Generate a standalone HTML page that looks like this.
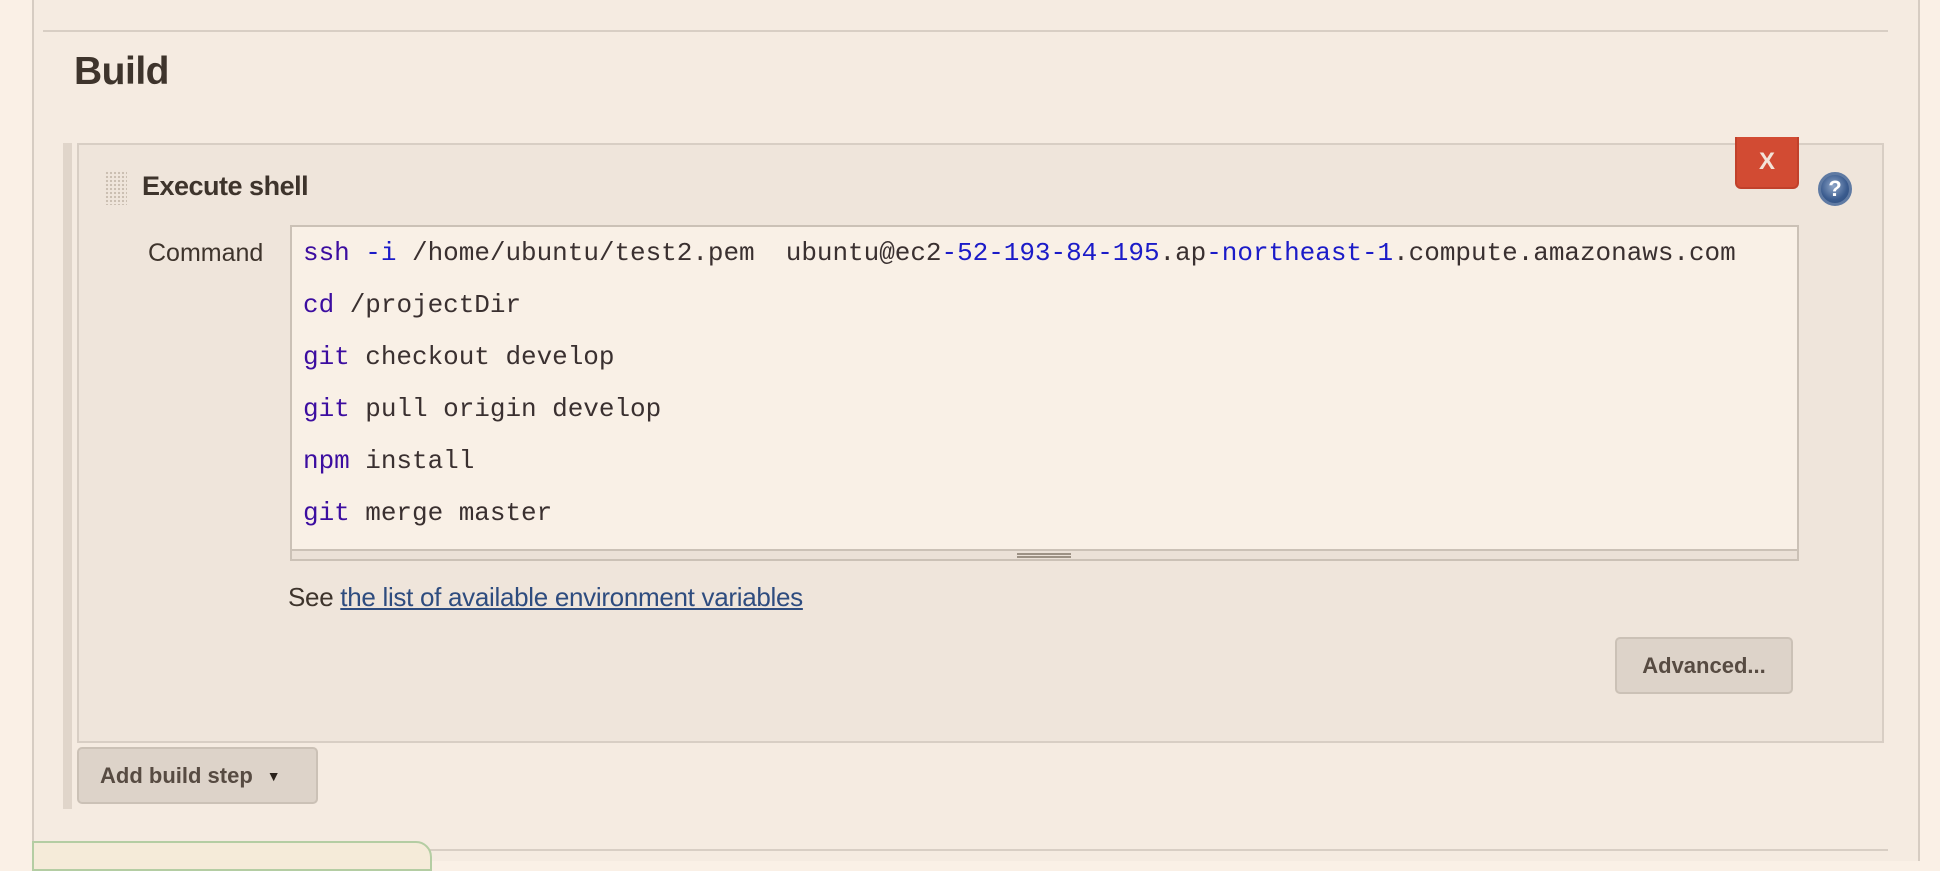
<!DOCTYPE html>
<html><head><meta charset="utf-8"><style>
*{margin:0;padding:0;box-sizing:border-box}
body{width:1940px;height:861px;overflow:hidden;background:#faf0e6;font-family:"Liberation Sans",Arial,sans-serif;position:relative}
.a{position:absolute}
.code div{position:absolute;left:11px;white-space:pre;font-family:"Liberation Mono","Courier New",monospace;font-size:26px;color:#3a3030;line-height:30px;letter-spacing:-0.03px}
.k{color:#3c0da0}.n{color:#1b1bc8}
.btn{background:#ddd3c9;border:2px solid #cbc1b6;border-radius:5px;color:#574b42;font-weight:bold;font-size:22px;display:flex;align-items:center}
</style></head><body>
<div class="a" style="left:32px;top:0;width:1888px;height:861px;background:#f5ebe1;border-left:2px solid #d6ccc2;border-right:2px solid #d6ccc2"></div>
<div class="a" style="left:43px;top:30px;width:1845px;height:2px;background:#d8cec4"></div>
<div class="a" style="left:74px;top:50px;font-size:39px;font-weight:bold;color:#3e342c;letter-spacing:-0.5px">Build</div>
<div class="a" style="left:63px;top:143px;width:9px;height:666px;background:#e0d5ca"></div>
<div class="a" style="left:77px;top:143px;width:1807px;height:600px;background:#efe5db;border:2px solid #d8cec4"></div>
<div class="a" style="left:105px;top:171px;width:22px;height:34px;background-image:radial-gradient(#c9bdb0 1px,transparent 1.3px);background-size:4px 4px"></div>
<div class="a" style="left:142px;top:171px;font-size:27px;font-weight:bold;color:#3e342c;letter-spacing:-0.5px">Execute shell</div>
<div class="a" style="left:1735px;top:137px;width:64px;height:52px;background:#d24b33;border:2px solid #c1412b;border-top:none;border-radius:0 0 6px 6px;color:#f3e4d8;font-weight:bold;font-size:24px;display:flex;align-items:center;justify-content:center">X</div>
<div class="a" style="left:1818px;top:172px;width:34px;height:34px;border-radius:50%;background:radial-gradient(circle at 45% 40%,#8fa6c8,#3a5b8e 60%,#2c4a7a);border:3px solid #5f7aa3;color:#fff;font-weight:bold;font-size:22px;display:flex;align-items:center;justify-content:center">?</div>
<div class="a" style="left:148px;top:239px;font-size:25px;color:#3e342c">Command</div>
<div class="a code" style="left:290px;top:225px;width:1509px;height:336px;background:#f9f0e6;border:2px solid #cbc1b6">
<div style="top:11px"><span class="k">ssh</span> <span class="n">-i</span> /home/ubuntu/test2.pem  ubuntu@ec2<span class="n">-52-193-84-195</span>.ap<span class="n">-northeast-1</span>.compute.amazonaws.com</div>
<div style="top:63px"><span class="k">cd</span> /projectDir</div>
<div style="top:115px"><span class="k">git</span> checkout develop</div>
<div style="top:167px"><span class="k">git</span> pull origin develop</div>
<div style="top:219px"><span class="k">npm</span> install</div>
<div style="top:271px"><span class="k">git</span> merge master</div>
<div style="left:0;top:322px;width:1505px;height:10px;background:#ebe1d7;border-top:2px solid #cbc1b6;padding:0"></div>
<div style="left:725px;top:326px;width:54px;height:5px;border-top:2px solid #9c9184;border-bottom:2px solid #9c9184;padding:0"></div>
</div>
<div class="a" style="left:288px;top:582px;font-size:26px;color:#3e342c;letter-spacing:-0.3px">See <span style="color:#2e4c7f;text-decoration:underline">the list of available environment variables</span></div>
<div class="a btn" style="left:1615px;top:637px;width:178px;height:57px;justify-content:center">Advanced...</div>
<div class="a btn" style="left:77px;top:747px;width:241px;height:57px;padding-left:21px">Add build step<span style="margin-left:14px;font-size:14px;color:#2a221c">▼</span></div>
<div class="a" style="left:430px;top:849px;width:1458px;height:2px;background:#d8cec4"></div>
<div class="a" style="left:32px;top:841px;width:400px;height:30px;background:#f5ebd9;border:2px solid #b4cda3;border-radius:0 16px 0 0"></div>
</body></html>
